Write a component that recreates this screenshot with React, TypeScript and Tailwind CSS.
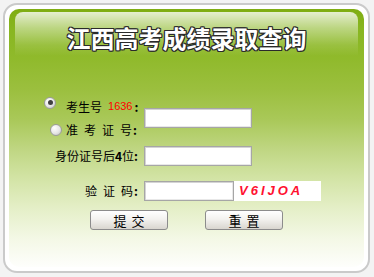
import React from "react";

const cjk = "font-['SimSun','Noto_Sans_CJK_SC',sans-serif]";

function Radio({ checked }: { checked?: boolean }) {
  return (
    <span className="flex h-[12px] w-[12px] shrink-0 items-center justify-center rounded-full border border-[#9c9c9c] bg-[radial-gradient(circle_at_35%_30%,#ffffff_0%,#e6e6e6_55%,#bdbdbd_100%)]">
      {checked && <span className="h-[5px] w-[5px] rounded-full bg-[#404040]" />}
    </span>
  );
}

function TextBox({ w }: { w: string }) {
  return (
    <div
      className={`${w} h-[20px] shrink-0 border border-[#a6a6a6] bg-white shadow-[inset_1px_1px_0_#d4d4d4,inset_-1px_-1px_0_#e8e8e8]`}
    />
  );
}

function Btn({ label }: { label: string }) {
  return (
    <button className="flex h-[20px] w-[78px] items-center justify-center rounded-[3px] border border-[#8c8c8c] bg-[linear-gradient(to_bottom,#ffffff_0%,#f3f2ef_45%,#d9d6cf_100%)] text-[13px] leading-none text-black tracking-[5px] pl-[5px]">
      {label}
    </button>
  );
}

export default function App() {
  return (
    <div className="h-[277px] w-[374px] overflow-hidden bg-[#f3f3f3] pl-[3px] pt-[3px]">
      <div className="flex h-[270px] w-[367px] flex-col rounded-[14px] border-2 border-[#cacaca] bg-white p-[4px]">
        <div className="flex flex-1 flex-col rounded-[10px] bg-[linear-gradient(to_bottom,#7fad12_0px,#88b620_20px,#90ba2c_50px,#9bbf3e_80px,#a9c858_110px,#bfd682_140px,#d3e4a6_170px,#e5efc8_200px,#f4f8e6_230px,#ffffff_262px)]">
          {/* glossy header */}
          <div className="mx-[6px] mt-[3px] h-[44px] rounded-t-[8px] bg-[linear-gradient(to_bottom,rgba(255,255,255,0.8)_0%,rgba(255,255,255,0.45)_35%,rgba(255,255,255,0.12)_75%,rgba(255,255,255,0)_100%)] pt-[11px]">
            <h1
              className={`text-center text-[24px] font-bold leading-[30px] text-white ${cjk} [text-shadow:1px_0_0_#2a2a2a,-1px_0_0_#2a2a2a,0_1px_0_#2a2a2a,0_-1px_0_#2a2a2a,1px_1px_0_#2a2a2a,-1px_-1px_0_#2a2a2a,1px_-1px_0_#2a2a2a,-1px_1px_0_#2a2a2a]`}
            >
              江西高考成绩录取查询
            </h1>
          </div>

          {/* form */}
          <div className={`mt-[39px] flex flex-col whitespace-nowrap pl-[31px] text-[12px] text-black ${cjk}`}>
            <div className="flex items-center gap-[6px]">
              <div className="flex w-[98px] shrink-0 flex-col">
                <div className="flex h-[23px] items-center pl-[4px]">
                  <span className="-mt-[8px] shrink-0">
                    <Radio checked />
                  </span>
                  <span className="ml-[10px] shrink-0">考生号</span>
                  <span className="ml-[6px] shrink-0 font-['Liberation_Sans',sans-serif] text-[11px] text-[#ff0000]">1636</span>
                  <span className="ml-[2px] shrink-0 font-bold">:</span>
                </div>
                <div className="flex h-[23px] items-center pl-[10px]">
                  <Radio />
                  <span className="ml-[4px] tracking-[6px]">准考证</span>
                  <span>号</span>
                  <span className="ml-[1px] font-bold">:</span>
                </div>
              </div>
              <TextBox w="w-[108px]" />
            </div>

            <div className="mt-[5px] flex items-center gap-[6px]">
              <div className="flex w-[98px] shrink-0 justify-end">
                <span>身份证号后</span>
                <span className="font-bold">4</span>
                <span>位</span>
                <span className="font-bold">:</span>
              </div>
              <TextBox w="w-[108px]" />
            </div>

            <div className="mt-[15px] flex items-center gap-[6px]">
              <div className="flex w-[98px] shrink-0 justify-end">
                <span className="tracking-[6px]">验证</span>
                <span>码</span>
                <span className="ml-[1px] font-bold">:</span>
              </div>
              <div className="flex">
                <TextBox w="w-[90px]" />
                <div className="flex h-[20px] w-[87px] items-center bg-white pl-[5px] font-['Liberation_Sans',sans-serif] text-[13px] font-bold italic tracking-[3px] text-[#ff1030]">
                  V6IJOA
                </div>
              </div>
            </div>
          </div>

          <div className={`mt-[9px] flex justify-center gap-[37px] ${cjk}`}>
            <Btn label="提交" />
            <Btn label="重置" />
          </div>
        </div>
      </div>
    </div>
  );
}
